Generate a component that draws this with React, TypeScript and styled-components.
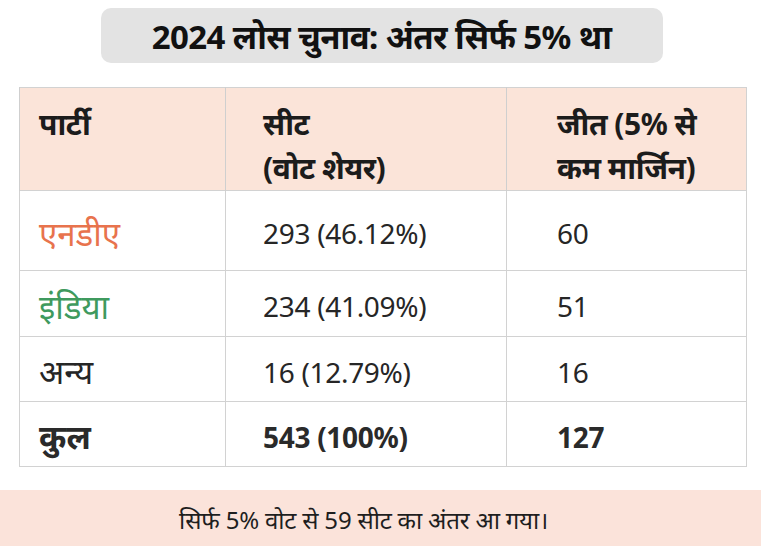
import React from 'react';
import styled, { createGlobalStyle } from 'styled-components';

const GlobalStyle = createGlobalStyle`
  html, body {
    margin: 0;
    padding: 0;
    background: #ffffff;
  }
  body {
    font-family: "Noto Sans", "Noto Sans Devanagari", "Liberation Sans", sans-serif;
    color: #222;
  }
`

type Row = {
  party: string
  color?: string
  seats: string
  wins: string
  bold?: boolean
  height: number
}

const rows: Row[] = [
  { party: 'एनडीए', color: '#e8734d', seats: '293 (46.12%)', wins: '60', height: 80 },
  { party: 'इंडिया', color: '#3f9a5e', seats: '234 (41.09%)', wins: '51', height: 66 },
  { party: 'अन्य', seats: '16 (12.79%)', wins: '16', height: 65 },
  { party: 'कुल', seats: '543 (100%)', wins: '127', bold: true, height: 65 },
]

const App: React.FC = () => {
  return (
    <Page>
      <GlobalStyle />
      <TitleBox>2024 लोस चुनाव: अंतर सिर्फ 5% था</TitleBox>

      <Table>
        <colgroup>
          <col style={{ width: 206 }} />
          <col style={{ width: 281 }} />
          <col style={{ width: 240 }} />
        </colgroup>
        <thead>
          <tr>
            <HeadCell $pad={19}>पार्टी</HeadCell>
            <HeadCell $pad={37}>सीट<br />(वोट शेयर)</HeadCell>
            <HeadCell $pad={50}>जीत (5% से<br />कम मार्जिन)</HeadCell>
          </tr>
        </thead>
        <tbody>
          {rows.map(row => (
            <tr key={row.party} style={{ height: row.height }}>
              <PartyCell $pad={19} $bold={row.bold} $color={row.color}>{row.party}</PartyCell>
              <Cell $pad={37} $bold={row.bold}>{row.seats}</Cell>
              <Cell $pad={50} $bold={row.bold}>{row.wins}</Cell>
            </tr>
          ))}
        </tbody>
      </Table>

      <Footer>सिर्फ 5% वोट से 59 सीट का अंतर आ गया।</Footer>
    </Page>
  )
}

const Page = styled.div`
  width: 761px;
  height: 546px;
  display: flex;
  flex-direction: column;
  align-items: flex-start;
  overflow: hidden;
`

const TitleBox = styled.div`
  align-self: center;
  box-sizing: border-box;
  width: 562px;
  height: 55px;
  margin-top: 8px;
  margin-left: 2px;
  border-radius: 10px;
  background: #e3e3e3;
  display: flex;
  align-items: center;
  justify-content: center;
  padding-top: 2px;
  font-size: 33px;
  font-weight: 700;
  letter-spacing: -0.6px;
  color: #111;
`

const Table = styled.table`
  margin-top: 24px;
  margin-left: 19px;
  width: 727px;
  border-collapse: collapse;
  table-layout: fixed;
  border: 1px solid #d2d2d2;
`

const HeadCell = styled.th<{ $pad: number }>`
  height: 103px;
  box-sizing: border-box;
  background: #fbe4d9;
  border-left: 1px solid #cfcfcf;
  text-align: left;
  vertical-align: top;
  padding: 14px 4px 0 ${props => props.$pad}px;
  font-size: 30px;
  font-weight: 700;
  line-height: 44px;
  letter-spacing: -0.5px;
  color: #1c1c1c;
  white-space: nowrap;
`

const Cell = styled.td<{ $pad: number; $bold?: boolean; $color?: string }>`
  border: 1px solid #d2d2d2;
  padding: 6px 4px 0 ${props => props.$pad}px;
  font-size: 28px;
  font-weight: ${props => (props.$bold ? 700 : 400)};
  letter-spacing: -0.3px;
  color: ${props => props.$color || (props.$bold ? '#2a2a2a' : '#262626')};
  vertical-align: middle;
  white-space: nowrap;
`

const PartyCell = styled(Cell)`
  font-size: 33px;
  letter-spacing: 0;
`

const Footer = styled.div`
  margin-top: 23px;
  width: 100%;
  height: 57px;
  background: #fbe3da;
  display: flex;
  align-items: center;
  justify-content: center;
  padding: 4px 34px 0 0;
  box-sizing: border-box;
  font-size: 24px;
  letter-spacing: -0.2px;
  color: #1e1e1e;
`

export default App
